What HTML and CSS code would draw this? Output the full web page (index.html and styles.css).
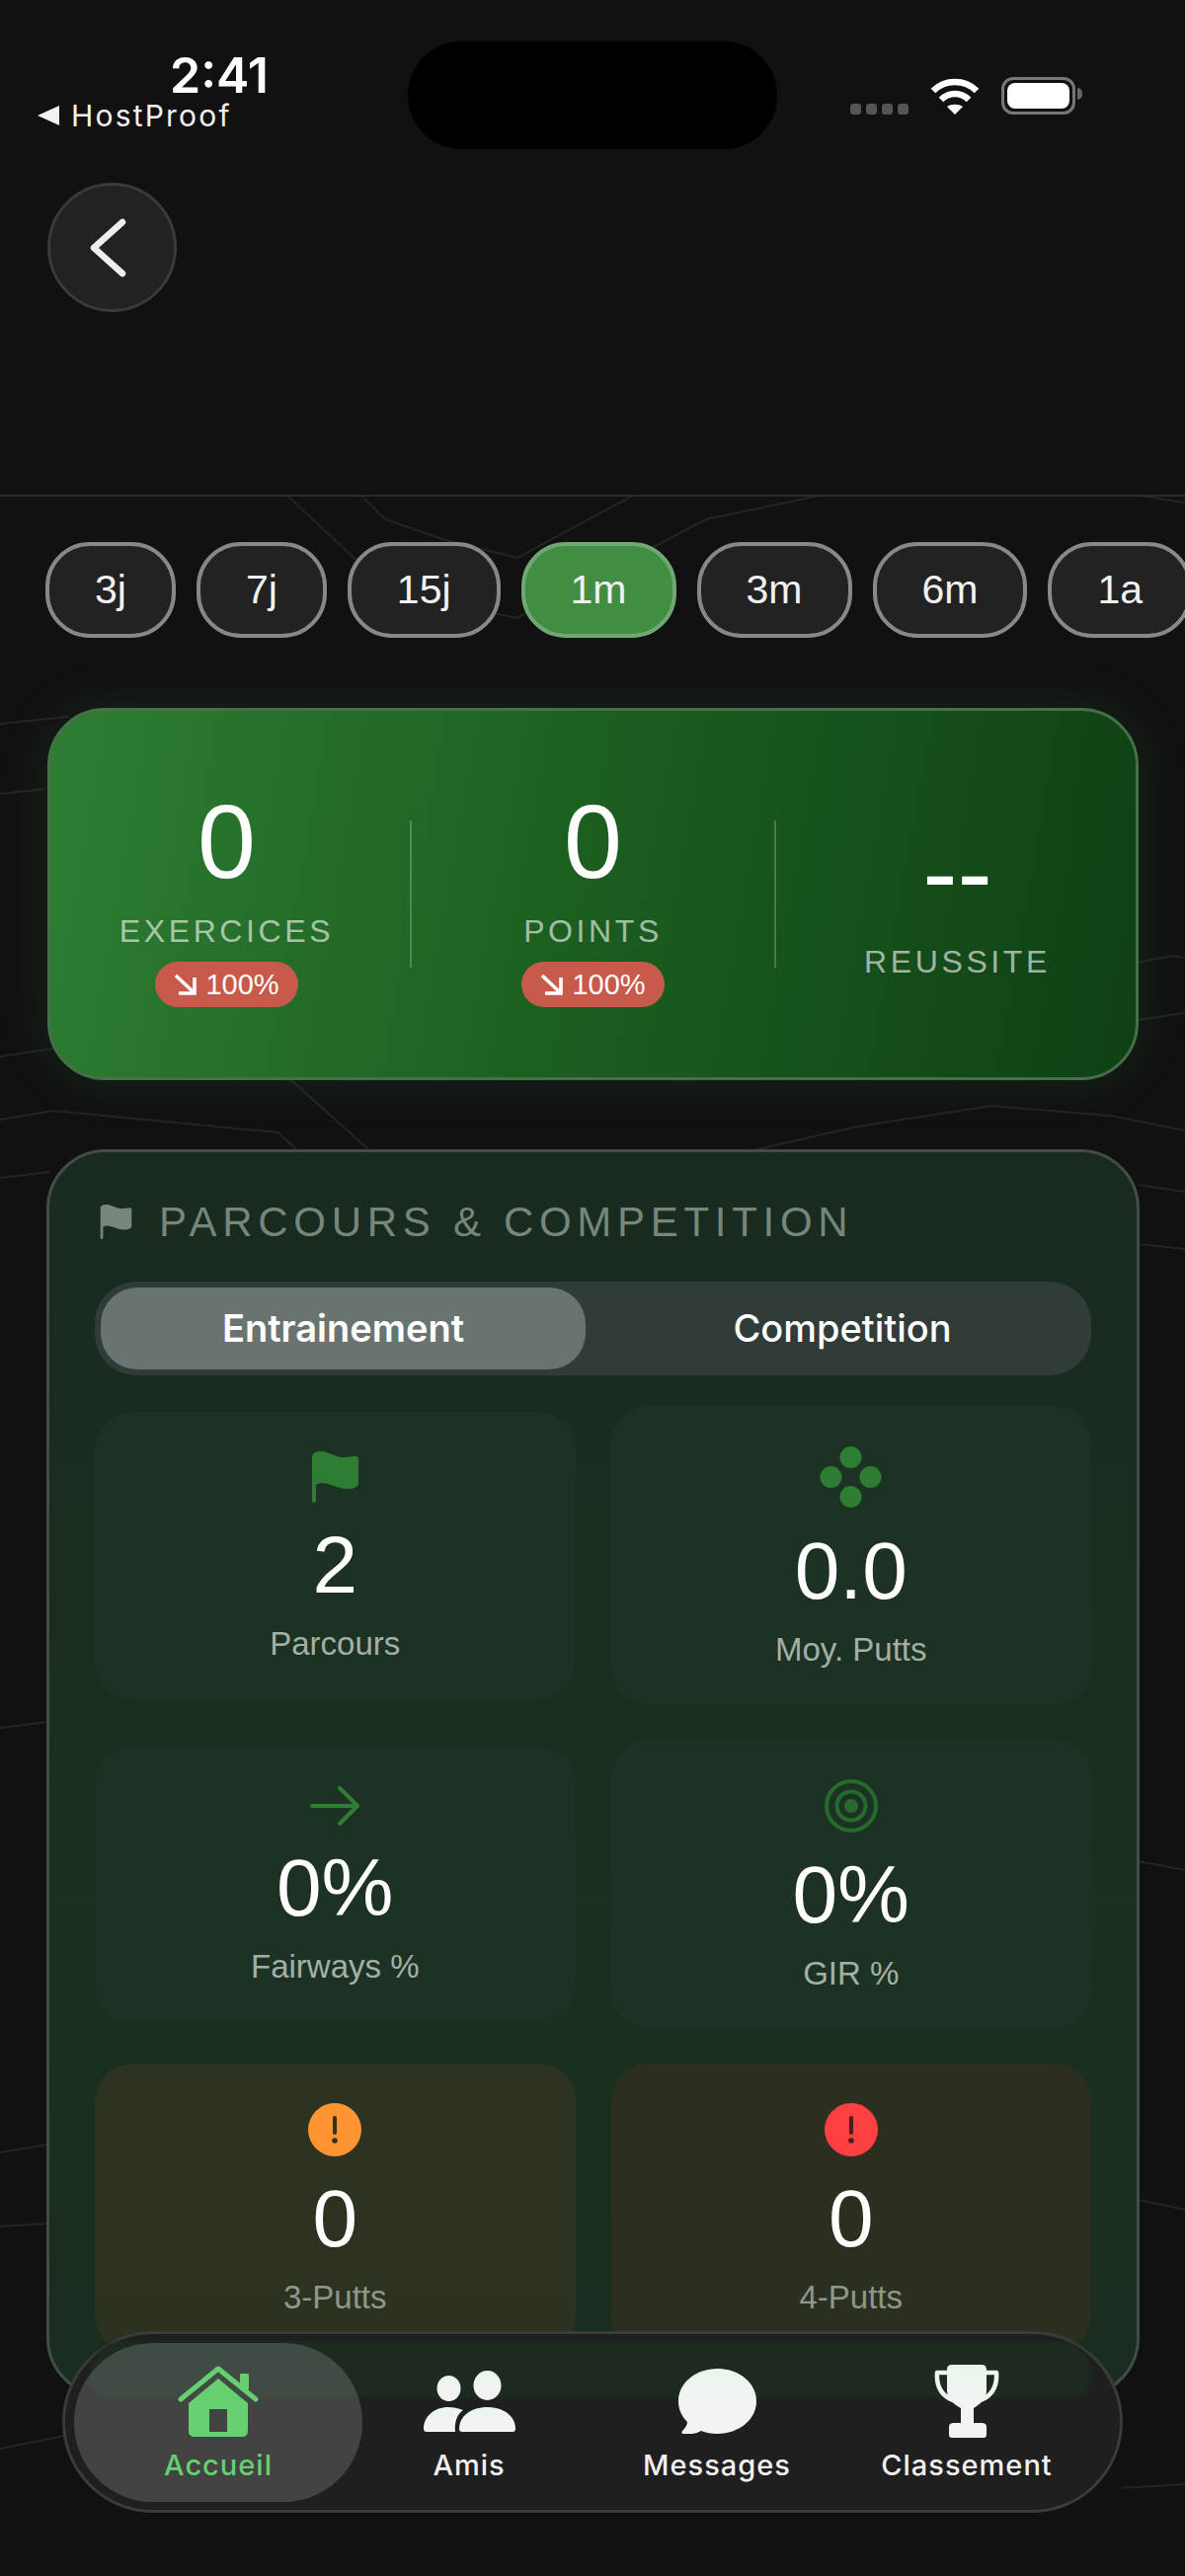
FILE: index.html
```html
<!DOCTYPE html>
<html lang="fr">
<head>
  <meta charset="UTF-8" />
  <meta name="viewport" content="width=device-width, initial-scale=1" />
  <title>Statistiques</title>
  <link rel="stylesheet" href="styles.css">
</head>
<body>
<div class="app">

  <!-- lignes de fond -->
  <svg class="bg-lines" width="1200" height="2609" viewBox="0 0 1200 2609" fill="none" stroke="#242424" stroke-width="2">
    <defs>
      <linearGradient id="tint" x1="0" y1="0" x2="0" y2="1">
        <stop offset="0" stop-color="#e8f6ec" />
        <stop offset="0.55" stop-color="#f3f3f3" />
      </linearGradient>
    </defs>
    <path d="M291 502 382 587 467 614 523 626 658 556 715 526 830 502" />
    <path d="M366 502 390 526 451 547 524 565 620 513 641 502" />
    <path d="M1155 502 1200 509" />
    <path d="M0 733 69 726M0 804 46 799M0 1070 54 1062" />
    <path d="M295 1094 373 1164" />
    <path d="M0 1134 54 1125 282 1147 300 1164" />
    <path d="M767 1164 868 1141 1004 1120 1125 1130 1200 1145" />
    <path d="M1152 975 1186 968 1200 970M1152 1033 1200 1026" />
    <path d="M0 1193 50 1187M1152 1200 1200 1207M1152 1260 1200 1265" />
    <path d="M0 1750 48 1744M0 2180 48 2172M0 2255 48 2252" />
    <path d="M1152 1885 1200 1894M1153 2228 1200 2238" />
    <path d="M0 2480 65 2467M1135 2520 1200 2516" />
  </svg>

  <header class="header">
    <div class="status">
      <div class="status-left">
        <div class="time">2:41</div>
        <div class="host"><span class="host-arrow"></span>HostProof</div>
      </div>
      <div class="island"></div>
      <div class="status-right">
        <div class="signal"><i></i><i></i><i></i><i></i></div>
        <svg class="wifi" width="50" height="38" viewBox="0 0 50 38">
          <path d="M3 14C15 2 35 2 47 14" fill="none" stroke="#fff" stroke-width="6.5" />
          <path d="M11 23C19 15 31 15 39 23" fill="none" stroke="#fff" stroke-width="6.5" />
          <path d="M17 30C21 27 29 27 33 30L25 38Z" fill="#fff" />
        </svg>
        <div class="battery"><span></span></div>
      </div>
    </div>
    <button class="back-btn" aria-label="Retour">
      <svg width="42" height="64" viewBox="0 0 42 64" fill="none" stroke="#eee" stroke-width="6.5" stroke-linecap="round" stroke-linejoin="round">
        <path d="M35 6 6 32 35 58" />
      </svg>
    </button>
  </header>

  <div class="periods">
    <a class="period">3j</a>
    <a class="period">7j</a>
    <a class="period">15j</a>
    <a class="period active">1m</a>
    <a class="period">3m</a>
    <a class="period">6m</a>
    <a class="period">1a</a>
  </div>

  <section class="summary">
    <div class="stat stat-first">
      <div class="stat-value">0</div>
      <div class="stat-label">EXERCICES</div>
      <div class="trend">
        <svg width="23" height="22" viewBox="0 0 23 22" fill="none" stroke="#fff" stroke-width="3.6"><path d="M2 2 20 19M21 4V20H5" /></svg>
        100%
      </div>
    </div>
    <div class="stat-sep"></div>
    <div class="stat stat-middle">
      <div class="stat-value">0</div>
      <div class="stat-label">POINTS</div>
      <div class="trend">
        <svg width="23" height="22" viewBox="0 0 23 22" fill="none" stroke="#fff" stroke-width="3.6"><path d="M2 2 20 19M21 4V20H5" /></svg>
        100%
      </div>
    </div>
    <div class="stat-sep"></div>
    <div class="stat stat-last">
      <div class="stat-value">--</div>
      <div class="stat-label">REUSSITE</div>
    </div>
  </section>

  <section class="parcours">
    <h2 class="parcours-title">
      <svg width="35" height="35" viewBox="0 0 47 52" fill="#76867b"><path d="M0 6C0 2 4 0 9 0 17 0 23 6 32 6 39 6 47 2 47 8V32C47 36 42 38 36 38 26 38 18 32 10 32 7 32 5 33 4 34V50Q4 52 2 52 0 52 0 50Z" /></svg>
      PARCOURS &amp; COMPETITION
    </h2>

    <div class="segment">
      <div class="segment-btn active">Entrainement</div>
      <div class="segment-btn">Competition</div>
    </div>

    <div class="tiles">
      <div class="tile">
        <div class="tile-icon">
          <svg width="47" height="52" viewBox="0 0 47 52" fill="#2e7d32"><path d="M0 6C0 2 4 0 9 0 17 0 23 6 32 6 39 6 47 2 47 8V32C47 36 42 38 36 38 26 38 18 32 10 32 7 32 5 33 4 34V50Q4 52 2 52 0 52 0 50Z" /></svg>
        </div>
        <div class="tile-value">2</div>
        <div class="tile-label">Parcours</div>
      </div>
      <div class="tile">
        <div class="tile-icon icon-tall">
          <svg width="63" height="62" viewBox="0 0 63 62" fill="#2e7d32"><circle cx="31.5" cy="11" r="11" /><circle cx="11.5" cy="31" r="11" /><circle cx="51.5" cy="31" r="11" /><circle cx="31.5" cy="51" r="11" /></svg>
        </div>
        <div class="tile-value">0.0</div>
        <div class="tile-label">Moy. Putts</div>
      </div>
      <div class="tile">
        <div class="tile-icon icon-short">
          <svg width="50" height="40" viewBox="0 0 50 40" fill="none" stroke="#2e7d32" stroke-width="4" stroke-linecap="round" stroke-linejoin="round"><path d="M2 20H47M30 2 48 20 30 38" /></svg>
        </div>
        <div class="tile-value">0%</div>
        <div class="tile-label">Fairways %</div>
      </div>
      <div class="tile">
        <div class="tile-icon">
          <svg width="54" height="54" viewBox="0 0 54 54" fill="none" stroke="#256b2b" stroke-width="4"><circle cx="27" cy="27" r="25" /><circle cx="27" cy="27" r="14.5" /><circle cx="27" cy="27" r="7" fill="#256b2b" stroke="none" /></svg>
        </div>
        <div class="tile-value">0%</div>
        <div class="tile-label">GIR %</div>
      </div>
      <div class="tile tile-warn">
        <div class="tile-icon">
          <svg width="54" height="54" viewBox="0 0 54 54"><circle cx="27" cy="27" r="27" fill="#ff9430" /><rect x="25" y="13" width="4" height="19" rx="2" fill="#2c3320" /><circle cx="27" cy="38" r="2.8" fill="#2c3320" /></svg>
        </div>
        <div class="tile-value">0</div>
        <div class="tile-label">3-Putts</div>
      </div>
      <div class="tile tile-warn tile-danger">
        <div class="tile-icon">
          <svg width="54" height="54" viewBox="0 0 54 54"><circle cx="27" cy="27" r="27" fill="#ff4040" /><rect x="25" y="13" width="4" height="19" rx="2" fill="#4a1e1e" /><circle cx="27" cy="38" r="2.8" fill="#4a1e1e" /></svg>
        </div>
        <div class="tile-value">0</div>
        <div class="tile-label">4-Putts</div>
      </div>
    </div>
  </section>

  <nav class="tabbar">
    <a class="tab tab-home active">
      <span class="tab-icon">
        <svg width="82" height="72" viewBox="0 0 82 72">
          <path d="M3 34 41 3 79 34" fill="none" stroke="#66d070" stroke-width="5" stroke-linecap="round" stroke-linejoin="round" />
          <rect x="63" y="8" width="9" height="16" rx="1.5" fill="#66d070" />
          <path fill-rule="evenodd" fill="#66d070" d="M41 13 71 38V66Q71 72 65 72H17Q11 72 11 66V38ZM32 44V67H50V44Z" />
        </svg>
      </span>
      Accueil
    </a>
    <a class="tab tab-friends">
      <span class="tab-icon">
        <svg width="93" height="62" viewBox="0 0 93 62" fill="url(#tint)">
          <ellipse cx="64.5" cy="15" rx="14" ry="15" />
          <ellipse cx="25.5" cy="18" rx="12" ry="13" />
          <path d="M36 59C36 46 48 37 64.5 37 81 37 93 46 93 59Q93 62 90 62H39Q36 62 36 59Z" />
          <path d="M0 59C0 46 11 37 25 37 30 37 35 38 40 40 34 44 31 52 32 62H3Q0 62 0 59Z" />
        </svg>
      </span>
      Amis
    </a>
    <a class="tab tab-messages">
      <span class="tab-icon">
        <svg width="79" height="66" viewBox="0 0 79 66" fill="url(#tint)"><path d="M39.5 0C61 0 79 14 79 33 79 52 61 66 39.5 66 33 66 28 65 23 63 18 66 10 67 5 66 3 65.500 3 64 4 63 7 60 9 57 9 54 3 48 0 41 0 33 0 14 18 0 39.500 0Z" /></svg>
      </span>
      Messages
    </a>
    <a class="tab tab-rank">
      <span class="tab-icon">
        <svg width="66" height="74" viewBox="0 0 66 74" fill="url(#tint)">
          <path d="M14 8H3C2 21 7 31 19 36M52 8H63C64 21 59 31 47 36" fill="none" stroke="#eef6f0" stroke-width="4.5" stroke-linejoin="round" />
          <path d="M18 0H48Q53 0 53 5V26C53 35 46 40 40 44V59H48Q53 59 53 63V71Q53 74 50 74H18Q15 74 15 71V63Q15 59 20 59H27V44C20 40 13 35 13 26V5Q13 0 18 0Z" />
        </svg>
      </span>
      Classement
    </a>
  </nav>

</div>
</body>
</html>
```

FILE: styles.css
```css
* {
  box-sizing: border-box;
}
html, body {
  margin: 0;
  padding: 0;
  background: #111;
}
.app {
  position: relative;
  width: 1200px;
  height: 2609px;
  overflow: hidden;
  background: #111;
  color: #fff;
  font-family: "Liberation Sans", Arial, sans-serif;
}
.bg-lines {
  position: absolute;
  top: 0;
  left: 0;
}

/* entete */
.header {
  position: relative;
  height: 503px;
  background: #111;
  border-bottom: 2px solid #2a2a2a;
}
.status {
  display: flex;
  height: 185px;
  font-family: Inter, sans-serif;
}
.status-left {
  width: 413px;
  padding: 51px 0 0 38px;
}
.time {
  padding-left: 134px;
  font-size: 50px;
  font-weight: 600;
  line-height: 1;
}
.host {
  display: flex;
  align-items: center;
  gap: 12px;
  margin-top: 1px;
  font-size: 30px;
  line-height: 1;
  letter-spacing: 2.2px;
  color: #f2f2f2;
}
.host-arrow {
  width: 0;
  height: 0;
  border-top: 10px solid transparent;
  border-bottom: 10px solid transparent;
  border-right: 22px solid #f2f2f2;
}
.island {
  width: 374px;
  height: 109px;
  margin-top: 42px;
  border-radius: 54px;
  background: #000;
}
.status-right {
  display: flex;
  align-items: flex-end;
  gap: 22px;
  height: 38px;
  margin: 78px 0 0 74px;
}
.signal {
  display: flex;
  gap: 5px;
}
.signal i {
  display: block;
  width: 11px;
  height: 11px;
  border-radius: 3px;
  background: #555;
}
.battery {
  position: relative;
  width: 75px;
  height: 38px;
  padding: 3px;
  border: 3px solid #777;
  border-radius: 12px;
}
.battery span {
  display: block;
  height: 100%;
  border-radius: 8px;
  background: #fff;
}
.battery::after {
  content: "";
  position: absolute;
  top: 8px;
  right: -10px;
  width: 5px;
  height: 12px;
  border-radius: 0 5px 5px 0;
  background: #666;
}
.back-btn {
  display: flex;
  align-items: center;
  justify-content: center;
  width: 131px;
  height: 131px;
  margin-left: 48px;
  padding: 0 8px 0 0;
  border: 3px solid #3a3a3a;
  border-radius: 50%;
  background: #222;
}

/* periodes */
.periods {
  position: relative;
  display: flex;
  gap: 21px;
  padding: 46px 0 0 46px;
}
.period {
  flex-shrink: 0;
  height: 97px;
  padding: 0 46px;
  border: 4px solid #888;
  border-radius: 45px;
  background: #222;
  font-size: 41px;
  line-height: 89px;
  color: #f2f2f2;
}
.period.active {
  border-color: #6fa873;
  background: #418e42;
}

/* resume vert */
.summary {
  position: relative;
  display: flex;
  align-items: center;
  width: 1105px;
  height: 377px;
  margin: 71px 0 0 48px;
  border: 3px solid #45704a;
  border-radius: 58px;
  background: linear-gradient(100deg, #2e7d32 0%, #1b5e20 50%, #0f4014 100%);
  box-shadow: 0 0 50px rgba(46, 125, 50, 0.22);
}
.stat {
  display: flex;
  flex-direction: column;
  align-items: center;
  width: 364px;
  margin-top: 8px;
}
.stat-first {
  padding-right: 7px;
}
.stat-middle {
  width: 367px;
}
.stat-last {
  padding-left: 3px;
}
.stat-sep {
  width: 2px;
  height: 149px;
  background: rgba(255, 255, 255, 0.22);
}
.stat-value {
  font-size: 106px;
  line-height: 1;
}
.stat-label {
  margin-top: 22px;
  font-size: 32px;
  line-height: 1;
  letter-spacing: 3.6px;
  color: rgba(255, 255, 255, 0.6);
}
.trend {
  display: flex;
  align-items: center;
  gap: 9px;
  height: 46px;
  margin-top: 15px;
  padding: 0 19.5px;
  border-radius: 23px;
  background: #c75a4a;
  font-size: 29px;
}

/* parcours */
.parcours {
  position: relative;
  width: 1107px;
  height: 1264px;
  margin: 70px 0 0 47px;
  padding: 53px 46px 0;
  border: 3px solid #444c46;
  border-radius: 60px;
  background: linear-gradient(#192a1e, #1b3021 60%, #1a2d20);
}
.parcours-title {
  display: flex;
  align-items: center;
  gap: 26px;
  height: 35px;
  margin: 0 0 43px 4px;
  font-size: 42px;
  font-weight: 400;
  letter-spacing: 5.7px;
  white-space: nowrap;
  color: #76867b;
}
.segment {
  display: flex;
  height: 95px;
  padding: 6px;
  border-radius: 42px;
  background: #303c37;
  font-family: Inter, sans-serif;
}
.segment-btn {
  flex: 1;
  padding-left: 14px;
  font-size: 38px;
  font-weight: 500;
  line-height: 83px;
  text-align: center;
}
.segment-btn.active {
  flex: 0 0 491px;
  padding-left: 0;
  border-radius: 37px;
  background: #69736f;
  font-weight: 600;
}
.tiles {
  display: grid;
  grid-template-columns: 1fr 1fr;
  align-items: center;
  gap: 35px 36px;
  margin-top: 31px;
}
.tile {
  display: flex;
  flex-direction: column;
  align-items: center;
  padding: 40px 0;
  border-radius: 38px;
  background: #1d3224;
}
.tile-warn {
  background: linear-gradient(#2c3321, #2b3220);
}
.tile-danger {
  background: linear-gradient(#2c2f20, #2b2f20);
}
.tile-icon {
  display: flex;
  align-items: center;
  height: 54px;
}
.tile:first-child .tile-icon {
  height: 52px;
}
.tile-icon.icon-tall {
  height: 64px;
}
.tile-icon.icon-short {
  height: 40px;
}
.tile-value {
  margin-top: 22px;
  font-size: 82px;
  line-height: 1;
}
.tile-label {
  margin-top: 22px;
  font-size: 33px;
  line-height: 1;
  color: #a3b0a5;
}
.tile-warn .tile-label {
  color: #8f978c;
}

/* barre du bas */
.tabbar {
  position: absolute;
  top: 2361px;
  left: 63px;
  display: flex;
  width: 1074px;
  height: 184px;
  padding: 9px;
  border: 3px solid #393c39;
  border-radius: 92px;
  background: #1f1f1f;
  font-family: Inter, sans-serif;
}
.tabbar::before {
  content: "";
  position: absolute;
  top: 7px;
  left: 24px;
  right: 28px;
  height: 58px;
  border-radius: 60px 60px 40px 40px;
  background: #1c2a20;
  filter: blur(1.5px);
}
.tab {
  position: relative;
  display: flex;
  flex-direction: column;
  align-items: center;
  height: 161px;
  padding-top: 22px;
  font-size: 29px;
  font-weight: 500;
  line-height: 1;
  letter-spacing: 1px;
  color: #f0f0f0;
}
.tab-icon {
  display: flex;
  align-items: center;
  height: 74px;
  margin-bottom: 13px;
}
.tab.active {
  border-radius: 80px;
  background: rgba(255, 255, 255, 0.16);
  color: #66d070;
}
.tab-home {
  width: 292px;
}
.tab-friends {
  width: 216px;
}
.tab-messages {
  width: 286px;
}
.tab-rank {
  width: 220px;
}
```
